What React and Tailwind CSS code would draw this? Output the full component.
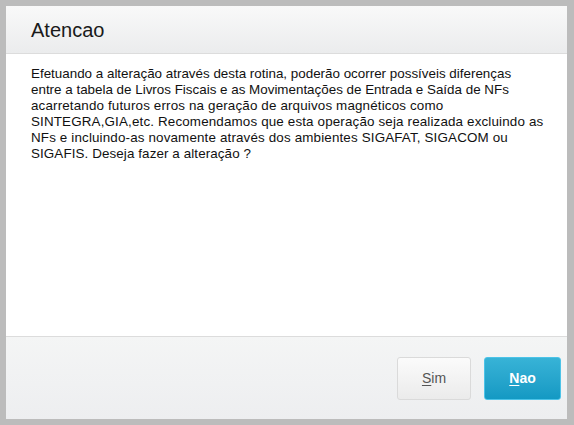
import React from 'react';

const lines = [
  { text: 'Efetuando a alteração através desta rotina, poderão ocorrer possíveis diferenças', cls: 'tracking-[0px]' },
  { text: 'entre a tabela de Livros Fiscais e as Movimentações de Entrada e Saída de NFs', cls: 'tracking-[0px]' },
  { text: 'acarretando futuros erros na geração de arquivos magnéticos como', cls: 'tracking-[0.15px]' },
  { text: 'SINTEGRA,GIA,etc. Recomendamos que esta operação seja realizada excluindo as', cls: 'tracking-[0.15px]' },
  { text: 'NFs e incluindo-as novamente através dos ambientes SIGAFAT, SIGACOM ou', cls: 'tracking-[0.15px]' },
  { text: 'SIGAFIS. Deseja fazer a alteração ?', cls: 'tracking-[0.1px]' },
];

export default function App() {
  return (
    <div className="w-[574px] h-[425px] bg-[#bcbcbc] pt-[6px] pl-[6px] pr-[7px] pb-[6px] font-['Liberation_Sans',Arial,sans-serif]">
      <div className="h-full flex flex-col bg-white">
        {/* Header */}
        <div className="h-[48px] flex items-center pl-[25px] border-b border-[#dcdcdc] bg-gradient-to-b from-[#f9f9f9] to-[#ebeced]">
          <h1 className="text-[20px] text-[#1a1a1a]">Atencao</h1>
        </div>

        {/* Body */}
        <div className="flex-1 px-[25px] pt-[12px] text-[13.4px] leading-[16px] text-[#111]">
          {lines.map((l, i) => (
            <p key={i} className={`whitespace-nowrap ${l.cls}`}>{l.text}</p>
          ))}
        </div>

        {/* Footer */}
        <div className="h-[83px] flex items-center justify-end gap-[13px] pr-[6px] border-t border-[#dcdcdc] bg-gradient-to-b from-[#f4f5f5] to-[#edeef0]">
          <button className="w-[74px] h-[43px] rounded-[3px] border border-[#dadada] bg-gradient-to-b from-[#fbfbfb] to-[#ebebeb] text-[14px] text-[#555]">
            <span className="underline underline-offset-2">S</span>im
          </button>
          <button className="w-[77px] h-[43px] rounded-[3px] border border-[#4cc3e8] bg-gradient-to-b from-[#37b3d7] to-[#1399c3] text-[14px] font-bold text-white">
            <span className="underline underline-offset-2">N</span>ao
          </button>
        </div>
      </div>
    </div>
  );
}
